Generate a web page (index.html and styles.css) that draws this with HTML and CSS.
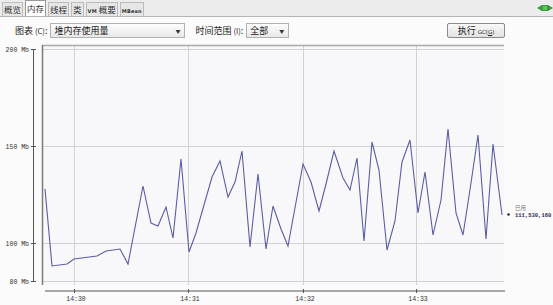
FILE: index.html
```html
<!DOCTYPE html>
<html lang="zh-CN">
<head>
  <meta charset="UTF-8">
  <title>内存</title>
  <link rel="stylesheet" href="styles.css">
</head>
<body>
  <div class="tabs">
    <span class="tab">概览</span>
    <span class="tab active">内存</span>
    <span class="tab">线程</span>
    <span class="tab">类</span>
    <span class="tab"><small>VM</small> 概要</span>
    <span class="tab"><small>MBean</small></span>
    <span class="spacer"></span>
    <svg class="status" width="16" height="8" viewBox="0 0 16 8">
      <path d="M0 4 L5 1 L11 1 L16 4 L11 7 L5 7 Z" fill="#3a9a3a"/>
      <rect x="6" y="2" width="4" height="4" fill="#68c068"/>
    </svg>
  </div>

  <div class="toolbar">
    <label class="lbl">图表 <u>(C)</u>:</label>
    <div class="combo wide">堆内存使用量<span class="arrow">▼</span></div>
    <label class="lbl">时间范围 <u>(I)</u>:</label>
    <div class="combo narrow">全部<span class="arrow">▼</span></div>
    <span class="spacer"></span>
    <button class="gc">执行 <small>GC(<u>G</u>)</small></button>
  </div>

  <svg class="chart" width="553" height="261" viewBox="0 44 553 261">
    <!-- plot area -->
    <rect x="42" y="45" width="462" height="240" fill="#f8f8fa"/>
    <g stroke="#d2d2d6" stroke-width="1">
      <line x1="42" y1="49.5" x2="504" y2="49.5"/>
      <line x1="42" y1="146.5" x2="504" y2="146.5"/>
      <line x1="42" y1="243.5" x2="504" y2="243.5"/>
      <line x1="42" y1="281.5" x2="504" y2="281.5"/>
      <line x1="74.5" y1="45" x2="74.5" y2="285"/>
      <line x1="188.5" y1="45" x2="188.5" y2="285"/>
      <line x1="303.5" y1="45" x2="303.5" y2="285"/>
      <line x1="416.5" y1="45" x2="416.5" y2="285"/>
    </g>
    <line x1="42" y1="45.5" x2="504" y2="45.5" stroke="#a8a8a8" stroke-width="1.5"/>
    <line x1="42.5" y1="45" x2="42.5" y2="285" stroke="#7a7a7a" stroke-width="1.5"/>

    <!-- y axis -->
    <line x1="33.5" y1="49" x2="33.5" y2="282" stroke="#555" stroke-width="1"/>
    <g stroke="#555" stroke-width="1">
      <line x1="31" y1="49.5" x2="36" y2="49.5"/>
      <line x1="31" y1="146.5" x2="36" y2="146.5"/>
      <line x1="31" y1="243.5" x2="36" y2="243.5"/>
      <line x1="31" y1="281.5" x2="36" y2="281.5"/>
    </g>
    <g class="axis-txt" text-anchor="end">
      <text x="29" y="51.5">200 Mb</text>
      <text x="29" y="148.5">150 Mb</text>
      <text x="29" y="245.5">100 Mb</text>
      <text x="29" y="283.5">80 Mb</text>
    </g>

    <!-- x axis -->
    <line x1="45" y1="291" x2="505" y2="291" stroke="#555" stroke-width="1"/>
    <g stroke="#555" stroke-width="1">
      <line x1="74.5" y1="289" x2="74.5" y2="293"/>
      <line x1="188.5" y1="289" x2="188.5" y2="293"/>
      <line x1="303.5" y1="289" x2="303.5" y2="293"/>
      <line x1="416.5" y1="289" x2="416.5" y2="293"/>
    </g>
    <g class="axis-txt" text-anchor="middle">
      <text x="76" y="300.5">14:30</text>
      <text x="190" y="300.5">14:31</text>
      <text x="305" y="300.5">14:32</text>
      <text x="418" y="300.5">14:33</text>
    </g>

    <!-- heap usage -->
    <polyline fill="none" stroke="#5c5ca6" stroke-width="1.1" stroke-linejoin="miter"
      points="45,189 52,266 67,264 74,259 97,256 106,251 120,249 128,264 143,186 151,223 158,226 166,207 173,238 181,159 189,252 196,233 212,177 220,161 228,197 235,182 242,151 250,247 258,174 266,249 273,206 281,229 288,246 303,164 311,182 319,211 326,184 334,151 343,178 350,190 357,158 364,241 372,142 379,170 387,250 395,221 402,162 410,140 418,213 425,172 433,235 441,200 448,129 456,213 463,235 471,183 478,135 486,239 493,144 502,215"/>

    <!-- legend -->
    <circle cx="508.5" cy="214.5" r="1.3" fill="#2a2a50"/>
    <text class="legend-name" x="515" y="210">已用</text>
    <text class="legend-val" x="515" y="216.5">111,530,160</text>
  </svg>
</body>
</html>
```

FILE: styles.css
```css
body {
  margin: 0;
  background: #fbfbfb;
  font-family: "Noto Sans CJK SC", "DejaVu Sans", sans-serif;
  font-size: 9px;
  color: #222;
  width: 553px;
  height: 305px;
  overflow: hidden;
}

.tabs {
  display: flex;
  align-items: flex-end;
  height: 16px;
  padding-left: 2px;
  background: #ececec;
  border-bottom: 1px solid #b4b4b4;
}

.tab {
  height: 13px;
  line-height: 13px;
  padding: 0 1px;
  margin-right: 2px;
  border: 1px solid #bcbcbc;
  border-bottom: none;
  background: #e6e6e6;
  font-size: 8.5px;
  color: #333;
  white-space: nowrap;
}

.tab small {
  font-family: "DejaVu Sans", sans-serif;
  font-size: 5px;
  font-weight: bold;
  letter-spacing: 0.2px;
}

.tab.active {
  height: 15px;
  line-height: 15px;
  background: #fff;
  border-color: #999;
}

.spacer {
  flex: 1;
}

.status {
  margin-bottom: 4px;
}

.toolbar {
  display: flex;
  align-items: center;
  height: 27px;
  padding: 0 48px 0 15px;
}

.lbl {
  font-size: 9px;
  margin-right: 3px;
}

.lbl u {
  text-decoration: none;
  font-size: 7.5px;
}

.combo {
  position: relative;
  height: 13px;
  line-height: 13px;
  padding-left: 3px;
  border: 1px solid #b0b0b0;
  background: linear-gradient(#fdfdfd, #e8e8e8);
  font-size: 9px;
}

.combo.wide {
  width: 130px;
  margin-right: 10px;
}

.combo.narrow {
  width: 38px;
}

.arrow {
  position: absolute;
  right: 4px;
  top: 0;
  font-size: 5px;
  color: #333;
}

.gc {
  width: 58px;
  height: 15px;
  padding: 0;
  border: 1px solid #8c8c8c;
  border-radius: 2px;
  background: linear-gradient(#fafafa, #e2e2e2);
  font-family: "Noto Sans CJK SC", sans-serif;
  font-size: 9px;
  line-height: 13px;
  color: #222;
}

.gc small {
  font-family: "DejaVu Sans", sans-serif;
  font-size: 5.5px;
}

.chart {
  display: block;
}

.axis-txt {
  font-family: "Liberation Mono", "DejaVu Sans Mono", monospace;
  font-size: 6.5px;
  fill: #333;
}

.legend-name {
  font-family: "Noto Sans CJK SC", sans-serif;
  font-size: 5.5px;
  fill: #777;
}

.legend-val {
  font-family: "Liberation Mono", monospace;
  font-size: 5.5px;
  font-weight: bold;
  fill: #2a2a5a;
}
```
